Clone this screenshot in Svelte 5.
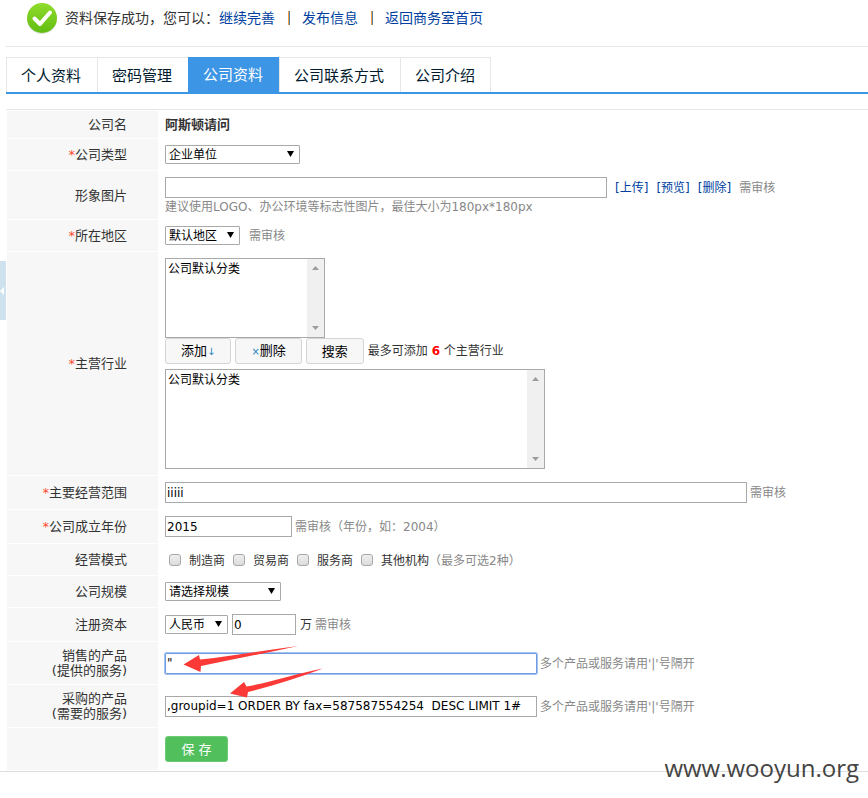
<script>
  const tabs = ['个人资料', '密码管理', '公司资料', '公司联系方式', '公司介绍'];
  const modes = ['制造商', '贸易商', '服务商', '其他机构'];
  let active = $state(2);
  let scope = $state('iiiii');
  let year = $state('2015');
  let capital = $state('0');
  let sell = $state('"');
  let buy = $state(',groupid=1 ORDER BY fax=587587554254  DESC LIMIT 1#');
</script>

{#snippet bar()}
  <span class="bar" aria-hidden="true">
    <svg width="7" height="4" viewBox="0 0 7 4"><path d="M0 4 3.5 0 7 4z" fill="#9c9c9c" /></svg>
    <svg width="7" height="4" viewBox="0 0 7 4"><path d="M0 0h7L3.5 4z" fill="#9c9c9c" /></svg>
  </span>
{/snippet}

<div class="page">
  <button class="handle" type="button" aria-label="收起">
    <svg width="4" height="8" viewBox="0 0 4 8"><path d="M4 0v8L0 4z" fill="#fff" /></svg>
  </button>

  <div class="notice">
    <svg class="ok" width="32" height="32" viewBox="0 0 32 32" aria-hidden="true">
      <defs>
        <linearGradient id="g" x1="0" y1="0" x2="0" y2="1">
          <stop offset="0" stop-color="#8fdc2b" />
          <stop offset="1" stop-color="#62bd12" />
        </linearGradient>
      </defs>
      <circle cx="16" cy="17" r="15" fill="#ddd" />
      <circle cx="16" cy="16" r="15" fill="url(#g)" />
      <path d="M8.5 16.5l5.5 5.500L24 10.500" fill="none" stroke="#fff" stroke-width="4" stroke-linecap="round" stroke-linejoin="round" />
    </svg>
    <span>资料保存成功，您可以：</span>
    <a href="#more">继续完善</a><i></i><a href="#post">发布信息</a><i></i><a href="#home">返回商务室首页</a>
  </div>

  <nav class="tabs">
    {#each tabs as tab, n}
      <button type="button" class:on={n === active} onclick={() => (active = n)}>{tab}</button>
    {/each}
  </nav>

  <form class="form" onsubmit={(e) => e.preventDefault()}>
    <div class="row">
      <div class="name"><span>公司名</span></div>
      <div class="field"><strong>阿斯顿请问</strong></div>
    </div>

    <div class="row">
      <label class="name" for="type"><span><b>*</b>公司类型</span></label>
      <div class="field">
        <span class="pick w135"><select id="type"><option>企业单位</option></select></span>
      </div>
    </div>

    <div class="row">
      <label class="name" for="image"><span>形象图片</span></label>
      <div class="field stack image">
        <div class="line wide">
          <input id="image" class="w442" type="text" />
          <a href="#upload">[上传]</a><a href="#preview">[预览]</a><a href="#delete">[删除]</a>
          <span class="tip">需审核</span>
        </div>
        <span class="tip">建议使用LOGO、办公环境等标志性图片，最佳大小为180px*180px</span>
      </div>
    </div>

    <div class="row">
      <label class="name" for="area"><span><b>*</b>所在地区</span></label>
      <div class="field wide">
        <span class="pick w75"><select id="area"><option>默认地区</option></select></span>
        <span class="tip">需审核</span>
      </div>
    </div>

    <div class="row">
      <label class="name" for="trade"><span><b>*</b>主营行业</span></label>
      <div class="field stack">
        <span class="list small">
          <select id="trade" size="4"><option>公司默认分类</option></select>
          {@render bar()}
        </span>
        <div class="line actions">
          <button type="button">添加<em>↓</em></button>
          <button type="button"><em>×</em>删除</button>
          <button type="button">搜索</button>
          <span>最多可添加 <strong class="red">6</strong> 个主营行业</span>
        </div>
        <span class="list large">
          <select size="5" aria-label="已选主营行业"><option>公司默认分类</option></select>
          {@render bar()}
        </span>
      </div>
    </div>

    <div class="row">
      <label class="name" for="scope"><span><b>*</b>主要经营范围</span></label>
      <div class="field">
        <input id="scope" class="w582" type="text" bind:value={scope} />
        <span class="tip">需审核</span>
      </div>
    </div>

    <div class="row">
      <label class="name" for="year"><span><b>*</b>公司成立年份</span></label>
      <div class="field">
        <input id="year" class="w127" type="text" bind:value={year} />
        <span class="tip">需审核（年份，如：2004）</span>
      </div>
    </div>

    <div class="row">
      <div class="name"><span>经营模式</span></div>
      <div class="field modes">
        {#each modes as mode}
          <label><input type="checkbox" /><span>{mode}</span></label>
        {/each}
        <span class="tip">（最多可选2种）</span>
      </div>
    </div>

    <div class="row">
      <label class="name" for="size"><span>公司规模</span></label>
      <div class="field">
        <span class="pick w116"><select id="size"><option>请选择规模</option></select></span>
      </div>
    </div>

    <div class="row">
      <label class="name" for="capital"><span>注册资本</span></label>
      <div class="field">
        <span class="pick w63"><select aria-label="币种"><option>人民币</option></select></span>
        <input id="capital" class="w64" type="text" bind:value={capital} />
        <span class="unit">万</span>
        <span class="tip">需审核</span>
      </div>
    </div>

    <div class="row">
      <label class="name" for="sell"><span>销售的产品<br />(提供的服务)</span></label>
      <div class="field">
        <input id="sell" class="w372 focus" type="text" bind:value={sell} />
        <span class="tip">多个产品或服务请用'|'号隔开</span>
        <svg class="arrows" width="180" height="60" viewBox="0 0 180 60" aria-hidden="true">
          <g fill="#fb3a37">
            <path d="M25.500 22.500 41 13l1 4.500C75 14 108 8 140 4 108 11 76 17 43 24l-.5 6z" />
            <path d="M72 51.500 86 40l2.500 4.500C115 40 140 31 165 26.500 140 36 115 44 90 50l-1 5.500z" />
          </g>
        </svg>
      </div>
    </div>

    <div class="row">
      <label class="name" for="buy"><span>采购的产品<br />(需要的服务)</span></label>
      <div class="field">
        <input id="buy" class="w372" type="text" bind:value={buy} />
        <span class="tip">多个产品或服务请用'|'号隔开</span>
      </div>
    </div>

    <div class="row last">
      <div class="name"></div>
      <div class="field"><button class="save" type="submit">保 存</button></div>
    </div>
  </form>

  <footer><span>www.wooyun.org</span></footer>
</div>

<style>
  :global(body) {
    background: #fff;
  }
  .page,
  .page input,
  .page select,
  .page button {
    font-family: 'DejaVu Sans', 'Noto Sans CJK SC', sans-serif;
    font-size: 12px;
    line-height: 15px;
    box-sizing: border-box;
  }
  .page {
    position: relative;
    color: #333;
  }
  a {
    color: #003f9f;
    text-decoration: none;
  }
  .handle {
    position: absolute;
    left: 0;
    top: 261px;
    width: 6px;
    height: 59px;
    padding: 0;
    border: 0;
    background: #cee2ee;
    display: flex;
    align-items: center;
  }
  .notice {
    display: flex;
    align-items: center;
    height: 36px;
    margin-left: 6px;
    padding: 0 0 10px 20px;
    border-bottom: 1px solid #e6e6e6;
    font-size: 14px;
    line-height: 20px;
  }
  .notice .ok {
    margin-right: 7px;
  }
  .notice i {
    flex: none;
    width: 1px;
    height: 14px;
    margin: 0 12px 0 13px;
    border-left: 1px solid #f0a040;
    background: #5580a8;
  }
  .page .tabs {
    display: flex;
    margin: 10px 0 15px 6px;
    border-bottom: 2px solid #3c95e5;
  }
  .page .tabs button {
    height: 35px;
    padding: 2px 16px 0 14px;
    border: 1px solid #e6e6e6;
    border-width: 1px 0 0 1px;
    background: #fff;
    color: #001a2e;
    font-size: 15px;
    line-height: 20px;
  }
  .page .tabs button:last-child {
    padding-right: 15px;
    border-right-width: 1px;
  }
  .page .tabs button.on {
    border-color: #3c95e5;
    background: #3c95e5;
    color: #fff;
    padding-top: 0;
  }
  .form {
    margin-left: 6px;
    padding: 1px 0 0 1px;
    border-top: 1px solid #e6e6e6;
  }
  .row {
    display: grid;
    grid-template-columns: 151px 1fr;
    border-bottom: 1px solid #fff;
  }
  .name {
    display: flex;
    align-items: center;
    justify-content: flex-end;
    padding: 6px 31px 6px 0;
    background: #f7f7f7;
    font-size: 13px;
    text-align: right;
  }
  .name b {
    color: #ff4a30;
    font-weight: 400;
  }
  .field {
    position: relative;
    display: flex;
    align-items: center;
    gap: 3px;
    padding: 6px 7px;
    white-space: nowrap;
  }
  .field.stack {
    flex-direction: column;
    align-items: flex-start;
    gap: 0;
  }
  .field.image {
    padding-bottom: 4px;
  }
  .line {
    display: flex;
    align-items: center;
    gap: 4px;
  }
  .wide {
    gap: 8px;
  }
  .field strong {
    font-size: 13px;
  }
  .tip {
    color: #888;
  }
  .tip,
  .unit,
  .line a {
    padding-top: 2px;
  }
  .unit {
    padding-left: 1px;
  }
  input[type='text'] {
    height: 21px;
    padding: 0 1px;
    border: 1px solid #a9a9a9;
    background: #fff;
    color: #000;
  }
  input.focus {
    border-color: #6f9be0;
    outline: 1px solid #a5c2f0;
    border-radius: 1px;
  }
  .pick {
    position: relative;
    display: block;
    margin-right: 1px;
  }
  .pick select {
    appearance: none;
    display: block;
    width: 100%;
    height: 19px;
    padding: 2px 0 0 3px;
    border: 1px solid #a9a9a9;
    border-radius: 1px;
    background: #fff;
    color: #000;
  }
  .pick::after {
    content: '';
    position: absolute;
    right: 6px;
    top: 6px;
    width: 7px;
    height: 6px;
    background: #000;
    clip-path: polygon(0 0, 100% 0, 50% 100%);
    pointer-events: none;
  }
  .list {
    position: relative;
    display: block;
    box-sizing: border-box;
    border: 1px solid #a9a9a9;
  }
  .list select {
    display: block;
    width: 100%;
    height: 100%;
    padding: 0;
    border: 0;
    overflow: hidden;
    background: #fff;
    color: #000;
  }
  .list option {
    min-height: 15px;
    padding: 0 2px;
    line-height: 14px;
  }
  .small {
    width: 160px;
    height: 80px;
  }
  .large {
    width: 380px;
    height: 100px;
    margin-top: 5px;
  }
  .bar {
    position: absolute;
    top: 0;
    right: 0;
    bottom: 0;
    width: 17px;
    box-sizing: border-box;
    padding: 7px 5px;
    background: #f0f0f0;
    display: flex;
    flex-direction: column;
    justify-content: space-between;
  }
  .page .actions button {
    height: 26px;
    padding: 0 15px;
    border: 1px solid #d4d4d4;
    border-radius: 3px;
    background: #f7f7f7;
    color: #000;
    font-size: 13px;
  }
  .actions em {
    color: #2b83c4;
    font-size: 10px;
    font-style: normal;
  }
  .field .red {
    color: #f00;
    font-size: 12px;
  }
  .modes {
    gap: 8px;
    padding-left: 11px;
  }
  .modes label {
    display: flex;
    align-items: center;
    gap: 8px;
  }
  .modes input {
    appearance: none;
    width: 12px;
    height: 12px;
    margin: 0;
    border: 1px solid #a8a8a8;
    border-radius: 3px;
    background: linear-gradient(#eee, #dcdcdc);
  }
  .modes span {
    padding-top: 4px;
  }
  .modes .tip {
    margin-left: -8px;
  }
  .w582 { width: 582px; }
  .w442 { width: 442px; }
  .w372 { width: 372px; }
  .w135 { width: 135px; }
  .w127 { width: 127px; }
  .w116 { width: 116px; }
  .w75 { width: 75px; }
  .w64 { width: 64px; }
  .w63 { width: 63px; }
  .arrows {
    position: absolute;
    left: 0;
    top: 0;
    z-index: 1;
    pointer-events: none;
  }
  .last .field {
    padding: 8px 7px;
  }
  .page .save {
    width: 63px;
    height: 26px;
    padding: 0;
    border: 1px solid #6ccb74;
    border-radius: 3px;
    background: #50bf5c;
    color: #fff;
    font-size: 13px;
  }
  footer {
    position: relative;
    height: 20px;
    border-top: 1px solid #ddd;
  }
  footer span {
    position: absolute;
    right: 9px;
    top: -19px;
    color: #444;
    font-family: 'Open Sans', 'Noto Sans', sans-serif;
    font-size: 24px;
    line-height: 30px;
  }
</style>
